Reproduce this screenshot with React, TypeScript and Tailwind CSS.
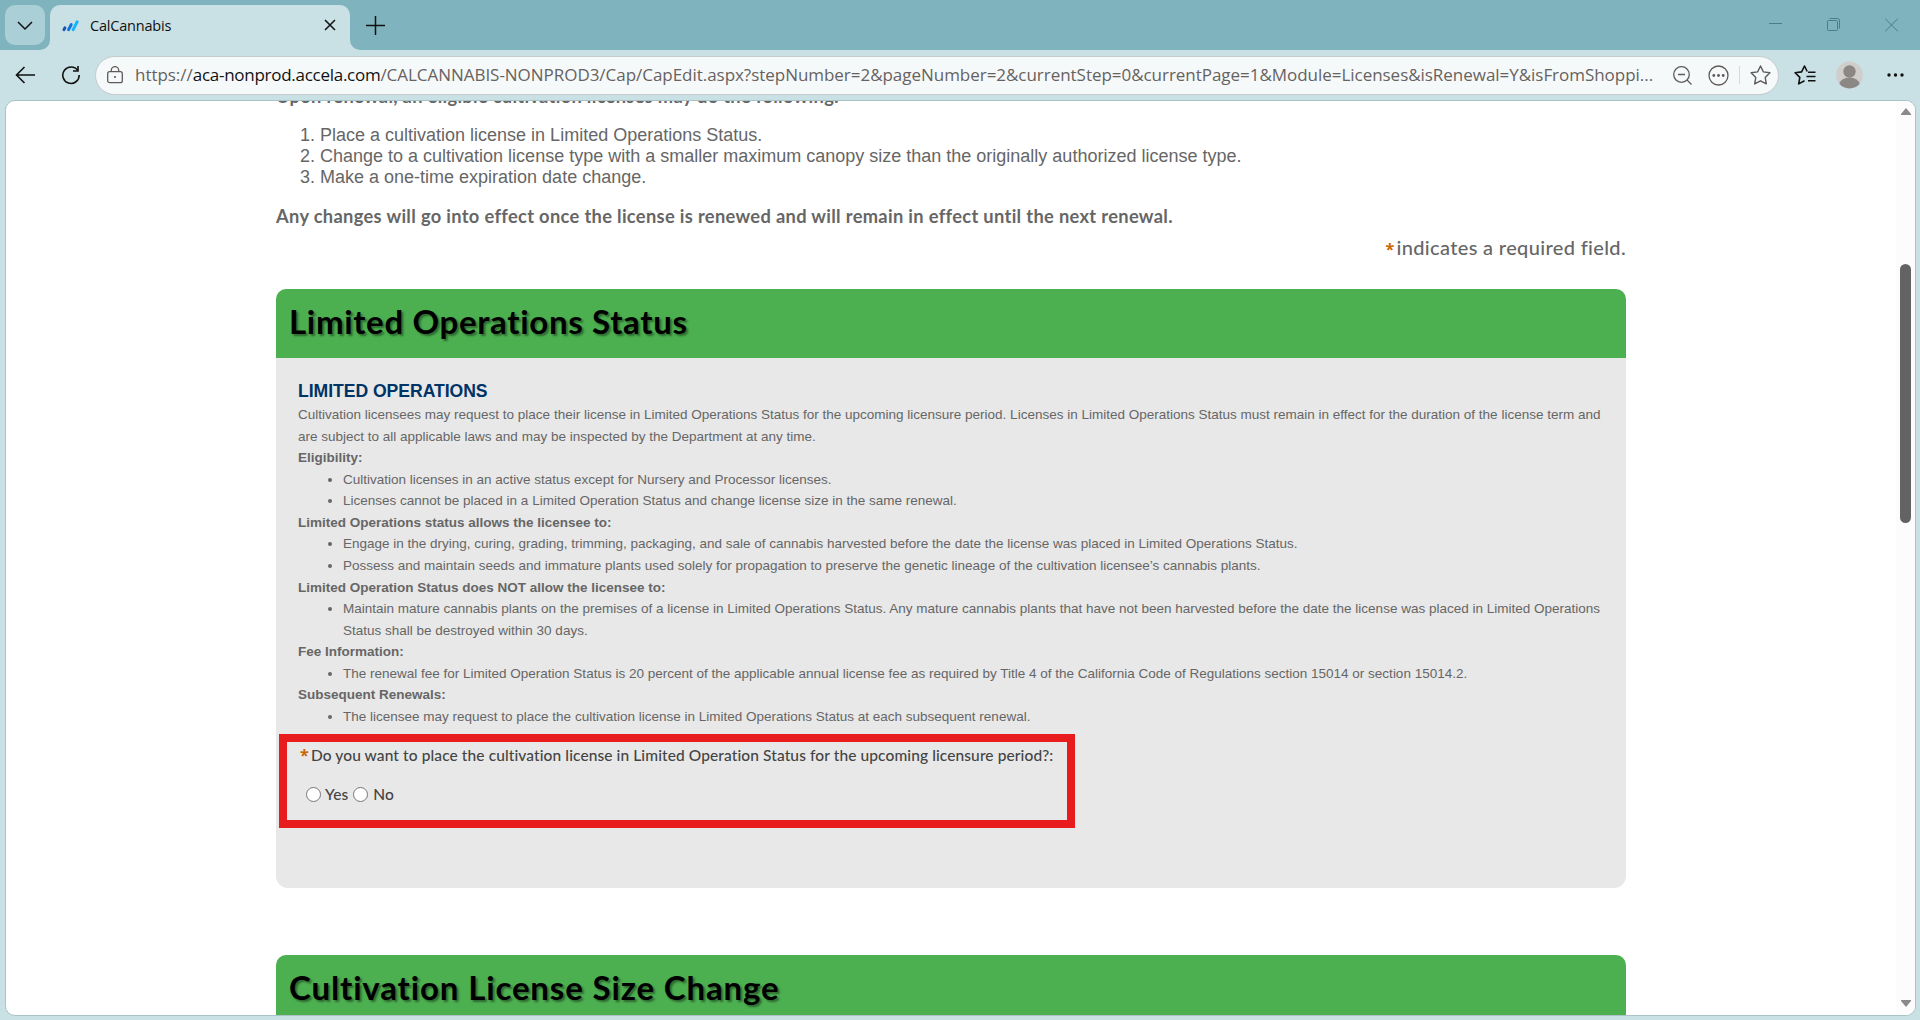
import type {ReactNode} from 'react'
import clsx from 'clsx'

const URL_PATH =
  '/CALCANNABIS-NONPROD3/Cap/CapEdit.aspx?stepNumber=2&pageNumber=2&currentStep=0&currentPage=1&Module=Licenses&isRenewal=Y&isFromShoppi...'

type Section = {
  title: string
  items: ReactNode[]
}

const sections: Section[] = [
  {
    title: 'Eligibility:',
    items: [
      'Cultivation licenses in an active status except for Nursery and Processor licenses.',
      'Licenses cannot be placed in a Limited Operation Status and change license size in the same renewal.'
    ]
  },
  {
    title: 'Limited Operations status allows the licensee to:',
    items: [
      'Engage in the drying, curing, grading, trimming, packaging, and sale of cannabis harvested before the date the license was placed in Limited Operations Status.',
      'Possess and maintain seeds and immature plants used solely for propagation to preserve the genetic lineage of the cultivation licensee’s cannabis plants.'
    ]
  },
  {
    title: 'Limited Operation Status does NOT allow the licensee to:',
    items: [
      <>
        Maintain mature cannabis plants on the premises of a license in Limited Operations Status. Any mature cannabis plants that have not been harvested before the date the license was placed in Limited Operations
        <br/>
        Status shall be destroyed within 30 days.
      </>
    ]
  },
  {
    title: 'Fee Information:',
    items: [
      'The renewal fee for Limited Operation Status is 20 percent of the applicable annual license fee as required by Title 4 of the California Code of Regulations section 15014 or section 15014.2.'
    ]
  },
  {
    title: 'Subsequent Renewals:',
    items: ['The licensee may request to place the cultivation license in Limited Operations Status at each subsequent renewal.']
  }
]

export default function App() {
  return (
    <div className="h-[1020px] w-[1920px] flex flex-col overflow-hidden bg-[#c9e0e4]">
      <TabStrip/>
      <Toolbar/>
      <div className="ml-[5px] mr-1 h-[916px] flex rounded-[10px] border border-[#a9c3c9] bg-white overflow-hidden">
        <main className="flex-1 overflow-hidden pl-[270px] font-['Liberation_Sans',Arial,sans-serif] text-[#666666] whitespace-nowrap">
          <Intro/>
          <LimitedOperations/>
          <div className="mt-[67px] w-[1350px]">
            <PanelHeader className="tracking-[0.86px]">Cultivation License Size Change</PanelHeader>
          </div>
        </main>
        <Scrollbar/>
      </div>
    </div>
  )
}

function TabStrip() {
  return (
    <div className="h-[50px] shrink-0 flex items-start bg-[#7fb4be] pt-[5px] pl-[5px]">
      <button className="size-10 flex items-center justify-center rounded-[10px] bg-[#abcfd6]">
        <svg width="16" height="10" viewBox="0 0 16 10" fill="none" stroke="#111" strokeWidth="1.5" className="mt-[2px]">
          <path d="M1 1l7 7 7-7"/>
        </svg>
      </button>
      <div className="ml-[5px] relative w-[300px] h-[45px] flex items-center rounded-t-[10px] bg-[#c9e0e4] pl-3 pb-1">
        {/* Flared corners where the tab meets the toolbar */}
        <svg className="absolute -left-[10px] bottom-0" width="10" height="10"><path d="M10 0v10H0A10 10 0 0 0 10 0" fill="#c9e0e4"/></svg>
        <svg className="absolute -right-[10px] bottom-0" width="10" height="10"><path d="M0 0v10h10A10 10 0 0 1 0 0" fill="#c9e0e4"/></svg>
        <svg width="17" height="12" viewBox="0 0 17 12" fill="none" strokeWidth="3" strokeLinecap="round">
          <path d="M2 9.600l.9-1.800" stroke="#1a56b0"/>
          <path d="M6.600 9.600l2.600-5" stroke="#1273d6"/>
          <path d="M11.200 9.600l3.900-7.700" stroke="#14b4ff"/>
        </svg>
        <span className="ml-[11px] font-['Open_Sans',sans-serif] text-[14.5px] tracking-[-0.2px] text-[#111]">CalCannabis</span>
        <svg className="absolute left-[274px] top-[14px]" width="12" height="12" fill="none" stroke="#111" strokeWidth="1.5">
          <path d="M1 1l10 10M11 1L1 11"/>
        </svg>
      </div>
      <svg className="ml-4 mt-[11px]" width="19" height="19" fill="none" stroke="#111" strokeWidth="1.5">
        <path d="M9.500 0v19M0 9.500h19"/>
      </svg>
      <div className="ml-auto mr-[22px] mt-[12px] flex items-center gap-[45px] text-[#4d7d88]">
        <svg width="13" height="15" stroke="currentColor"><path d="M0 6.500h13"/></svg>
        <svg width="13" height="15" fill="none" stroke="currentColor">
          <rect x=".5" y="3.500" width="10" height="10" rx="1"/>
          <path d="M2.500 1.500h8a2 2 0 0 1 2 2v8"/>
        </svg>
        <svg width="13" height="15" stroke="currentColor"><path d="M0 1.500l13 13M13 1.500l-13 13"/></svg>
      </div>
    </div>
  )
}

function Toolbar() {
  return (
    <div className="h-[50px] shrink-0 flex items-center pl-[15px]">
      <svg width="21" height="18" fill="none" stroke="#111" strokeWidth="1.600"><path d="M20 9H1.500M9.500 1L1.500 9l8 8"/></svg>
      <svg className="ml-[25px]" width="20" height="20" fill="none" stroke="#111" strokeWidth="1.600">
        <path d="M16.800 5.600A8.200 8.200 0 1 0 18.200 10"/>
        <path d="M17 1v5h-5"/>
      </svg>
      <div className="ml-[14px] w-[1684px] h-[39px] flex items-center rounded-full border border-[#c3cbcd] bg-[#f6f9fa] pl-[11px]">
        <svg width="16" height="18" fill="none" stroke="#5f5b58" strokeWidth="1.300">
          <rect x=".7" y="5.700" width="14.600" height="11" rx="2"/>
          <path d="M4.300 5.700V4.300a3.700 3.700 0 0 1 7.400 0v1.400"/>
          <circle cx="8" cy="11" r="1.100" fill="#5f5b58" stroke="none"/>
        </svg>
        <span className="ml-3 font-['Open_Sans',sans-serif] text-[17px] tracking-[-0.035px] text-[#666260] whitespace-nowrap">
          https://<span className="tracking-[-0.27px] text-[#111]">aca-nonprod.accela.com</span>{URL_PATH}
        </span>
        <div className="ml-auto mr-[7px] flex items-center text-[#5f5b58]">
          <svg width="19" height="19" fill="none" stroke="currentColor" strokeWidth="1.300">
            <circle cx="8.500" cy="8.500" r="7.800"/>
            <path d="M5 8.500h7M14 14l4.500 4.500"/>
          </svg>
          <svg className="ml-4" width="21" height="21" fill="none" stroke="currentColor" strokeWidth="1.300">
            <circle cx="10.500" cy="10.500" r="9.500"/>
            <g fill="currentColor" stroke="none">
              <circle cx="5.800" cy="10.500" r="1.400"/><circle cx="10.500" cy="10.500" r="1.400"/><circle cx="15.200" cy="10.500" r="1.400"/>
            </g>
          </svg>
          <div className="ml-[10px] h-[18px] w-px bg-[#d5dadb]"/>
          <svg className="ml-[10px]" width="21" height="20" fill="none" stroke="currentColor" strokeWidth="1.400" strokeLinejoin="round">
            <path d="M10.500 1l2.900 5.900 6.500.9-4.700 4.600 1.100 6.500-5.800-3.100-5.800 3.100 1.100-6.500L1.100 7.800l6.500-.9z"/>
          </svg>
        </div>
      </div>
      <svg className="ml-[15px]" width="22" height="20" fill="none" stroke="#111" strokeWidth="1.600" strokeLinejoin="round">
        <path d="M13.200 6.500L10.500 1 7.600 6.900l-6.500.9 4.700 4.600-1.100 6.500 5.800-3.100"/>
        <path d="M14 7.200h7.500M12.500 11.500h9M14 15.800h7.500"/>
      </svg>
      <svg className="ml-[20px]" width="27" height="28" viewBox="0 0 27 28">
        <circle cx="13.500" cy="14" r="13.500" fill="#d0cecc"/>
        <circle cx="13.500" cy="10.500" r="6.200" fill="#8b8785"/>
        <path d="M3.500 23a10 6.500 0 0 1 20 0 13.500 13.500 0 0 1-20 0" fill="#8b8785"/>
      </svg>
      <svg className="ml-[24px]" width="17" height="4" fill="#111">
        <circle cx="2" cy="2" r="1.700"/><circle cx="8.500" cy="2" r="1.700"/><circle cx="15" cy="2" r="1.700"/>
      </svg>
    </div>
  )
}

function Star() {
  return <span className="inline-block w-[11px] text-left font-['Open_Sans',sans-serif] font-bold text-[16px] leading-none tracking-normal text-[#cc6600]">*</span>
}

function Intro() {
  return (
    <div className="w-[1350px]">
      <p className="-mt-[16px] h-[22px] leading-[22px] font-['Lato',sans-serif] font-bold text-[18.3px] tracking-[0.31px]">
        Upon renewal, an eligible cultivation licenses may do the following:
      </p>
      <ol className="mt-[18px] pl-[44px] list-decimal text-[18px] leading-[21px]">
        <li>Place a cultivation license in Limited Operations Status.</li>
        <li>Change to a cultivation license type with a smaller maximum canopy size than the originally authorized license type.</li>
        <li>Make a one-time expiration date change.</li>
      </ol>
      <p className="mt-[17px] leading-[22px] font-['Lato',sans-serif] font-bold text-[18.3px] tracking-[0.33px]">
        Any changes will go into effect once the license is renewed and will remain in effect until the next renewal.
      </p>
      <p className="mt-[8px] h-[24px] leading-[24px] text-right font-['Lato',sans-serif] font-medium text-[20px] tracking-[0.35px]">
        <Star/>indicates a required field.
      </p>
    </div>
  )
}

function PanelHeader({children, className}: {children: ReactNode; className?: string}) {
  return (
    <h1
      className={clsx(
        "h-[69px] rounded-t-[10px] bg-[#4caf50] pl-[13px] pt-[12px] font-['Lato',sans-serif] font-bold text-[33px] leading-[40px] text-black [text-shadow:2px_2px_2px_rgba(0,0,0,0.4)]",
        className
      )}
    >
      {children}
    </h1>
  )
}

function LimitedOperations() {
  return (
    <section className="mt-[30px] w-[1350px]">
      <PanelHeader className="tracking-[0.68px]">Limited Operations Status</PanelHeader>
      <div className="h-[530px] rounded-b-[12px] bg-[#e8e8e8] pl-[22px] pt-[21px]">
        <h2 className="text-[17.6px] leading-[24px] font-bold tracking-[-0.04px] text-[#003366]">LIMITED OPERATIONS</h2>
        <div className="mt-px text-[13.5px] leading-[21.56px]">
          <p>
            Cultivation licensees may request to place their license in Limited Operations Status for the upcoming licensure period. Licenses in Limited Operations Status must remain in effect for the duration of the license term and
            <br/>
            are subject to all applicable laws and may be inspected by the Department at any time.
          </p>
          {sections.map((section) => (
            <div key={section.title}>
              <p className="font-bold">{section.title}</p>
              <ul className="list-disc pl-[45px]">
                {section.items.map((item, i) => (
                  <li key={i}>{item}</li>
                ))}
              </ul>
            </div>
          ))}
        </div>
        <RequiredQuestion/>
      </div>
    </section>
  )
}

function RequiredQuestion() {
  return (
    <div className="-ml-[19px] mt-[7px] w-[796px] h-[94px] border-[8px] border-[#e81c1c] pl-[13px] pt-[3px] font-['Lato',sans-serif] font-medium text-[15.5px] tracking-[0.1px] leading-[20px] text-[#444444]">
      <p className="h-5"><Star/>Do you want to place the cultivation license in Limited Operation Status for the upcoming licensure period?:</p>
      <div className="mt-[19px] ml-[6px] flex items-center">
        <Radio/><span className="ml-1 mr-[5px]">Yes</span>
        <Radio/><span className="ml-[5px]">No</span>
      </div>
    </div>
  )
}

function Radio() {
  return <span className="size-[15px] rounded-full border border-[#767676] bg-white"/>
}

function Scrollbar() {
  return (
    <div className="w-[19px] flex flex-col items-center bg-[#fcfcfc] pt-[7px] pb-[7px]">
      <svg width="10" height="8" fill="#8a8a8a"><path d="M5 0l5 6v1H0V6z"/></svg>
      <div className="mt-[148px] h-[259px] w-[11px] rounded-full bg-[#636363]"/>
      <svg className="mt-auto" width="10" height="8" fill="#8a8a8a"><path d="M0 1V0h10v1L5 7z"/></svg>
    </div>
  )
}
